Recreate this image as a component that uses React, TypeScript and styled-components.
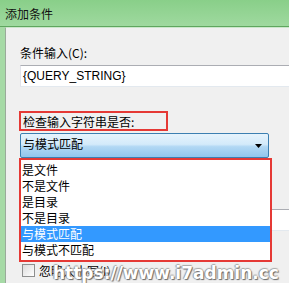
import React from "react";
import styled, { createGlobalStyle } from "styled-components";

const Global = createGlobalStyle`
  html, body { margin: 0; padding: 0; overflow: hidden; background: #f0f0f0; }
  body { width: 289px; height: 283px; }
`;

const Window = styled.div`
  position: relative;
  width: 289px;
  height: 283px;
  overflow: hidden;
  display: flex;
  flex-direction: column;
  background: #a6daa6;
  font-family: "Noto Sans CJK SC", "Liberation Sans", sans-serif;
  color: #000;
`;

const TitleBar = styled.div`
  flex: none;
  height: 27px;
  box-sizing: border-box;
  padding: 6px 0 0 5px;
  font-size: 12px;
  line-height: 15px;
  color: #111;
  background: linear-gradient(#89cf89, #9fd99f);
  border-bottom: 1px solid #5fa65f;
`;

const Frame = styled.div`
  flex: 1;
  display: flex;
  padding-left: 5px;
  min-height: 0;
`;

const Panel = styled.div`
  flex: 1;
  display: flex;
  flex-direction: column;
  align-items: flex-start;
  background: #f0f0f0;
  border-left: 1px solid #9aab9a;
  border-top: 1px solid #cbe7cb;
  padding: 17px 0 0 14px;
  min-width: 0;
`;

const Label = styled.div`
  font-size: 12px;
  line-height: 15px;
  white-space: nowrap;
`;

const TextBox = styled.div<{ $top: number }>`
  margin-top: ${(p) => p.$top}px;
  flex: none;
  width: 290px;
  height: 22px;
  box-sizing: border-box;
  background: #fff;
  border: 1px solid;
  border-color: #abadb3 #dbdfe6 #e3e9ef #e2e3ea;
  padding: 3px 0 0 2px;
  font-family: "Liberation Sans", "Noto Sans CJK SC", sans-serif;
  font-size: 12px;
  line-height: 15px;
  color: #000;
`;

const Highlight = styled.div`
  margin-top: 24px;
  margin-left: -1px;
  width: 149px;
  height: 20px;
  box-sizing: border-box;
  border: 2px solid #e53935;
  padding: 1px 0 0 2px;
`;

const Combo = styled.div`
  position: relative;
  margin-top: 2px;
  width: 249px;
  height: 25px;
  box-sizing: border-box;
  border: 1px solid #3c7fb1;
  border-radius: 2px;
  background: linear-gradient(#e6f3fc 0%, #d3eafa 45%, #b2d8f4 55%, #92c6ec 100%);
  padding: 2px 0 0 2px;
  font-size: 12px;
  line-height: 15px;
`;

const Arrow = styled.svg`
  position: absolute;
  right: 6px;
  top: 10px;
`;

const DropList = styled.ul`
  position: absolute;
  top: 24px;
  left: -2px;
  z-index: 2;
  margin: 0;
  padding: 2px 0;
  list-style: none;
  width: 253px;
  height: 104px;
  box-sizing: border-box;
  border: 2px solid #e53935;
  background: #fff;
`;

const Item = styled.li<{ $active?: boolean }>`
  height: 16px;
  line-height: 16px;
  padding-left: 1px;
  font-size: 12px;
  white-space: nowrap;
  background: ${(p) => (p.$active ? "#3399ff" : "transparent")};
  color: ${(p) => (p.$active ? "#fff" : "#000")};
`;

const CheckRow = styled.div`
  margin-top: 32px;
  margin-left: 2px;
  display: flex;
  align-items: center;
  gap: 4px;
  font-size: 12px;
  line-height: 15px;
`;

const CheckBox = styled.span`
  width: 13px;
  height: 13px;
  box-sizing: border-box;
  border: 1px solid #8e8f8f;
  background: linear-gradient(135deg, #dcdcdc, #fff);
`;

const Stamp = styled.div`
  position: absolute;
  left: 53px;
  top: 263px;
  z-index: 4;
  font-family: "DejaVu Sans", sans-serif;
  font-weight: bold;
  font-size: 17px;
  line-height: 20px;
  color: #fff;
  white-space: nowrap;
  text-shadow: 1px 1px 1px #666, -1px 0 1px #999, 0 -1px 1px #aaa;
  pointer-events: none;
`;

const options = ["是文件", "不是文件", "是目录", "不是目录", "与模式匹配", "与模式不匹配"];

export default function App() {
  return (
    <>
      <Global />
      <Window>
        <TitleBar>添加条件</TitleBar>
        <Frame>
          <Panel>
            <Label>条件输入(C):</Label>
            <TextBox $top={5}>{"{QUERY_STRING}"}</TextBox>
            <Highlight>
              <Label>检查输入字符串是否:</Label>
            </Highlight>
            <Combo>
              与模式匹配
              <Arrow width="7" height="4" viewBox="0 0 7 4">
                <path d="M0 0H7L3.5 4Z" fill="#000" />
              </Arrow>
              <DropList>
                {options.map((o, i) => (
                  <Item key={o} $active={i === 4}>
                    {o}
                  </Item>
                ))}
              </DropList>
            </Combo>
            <TextBox $top={51} />
            <CheckRow>
              <CheckBox />
              忽略大小写(I)
            </CheckRow>
          </Panel>
        </Frame>
        <Stamp>https://www.i7admin.cc</Stamp>
      </Window>
    </>
  );
}
